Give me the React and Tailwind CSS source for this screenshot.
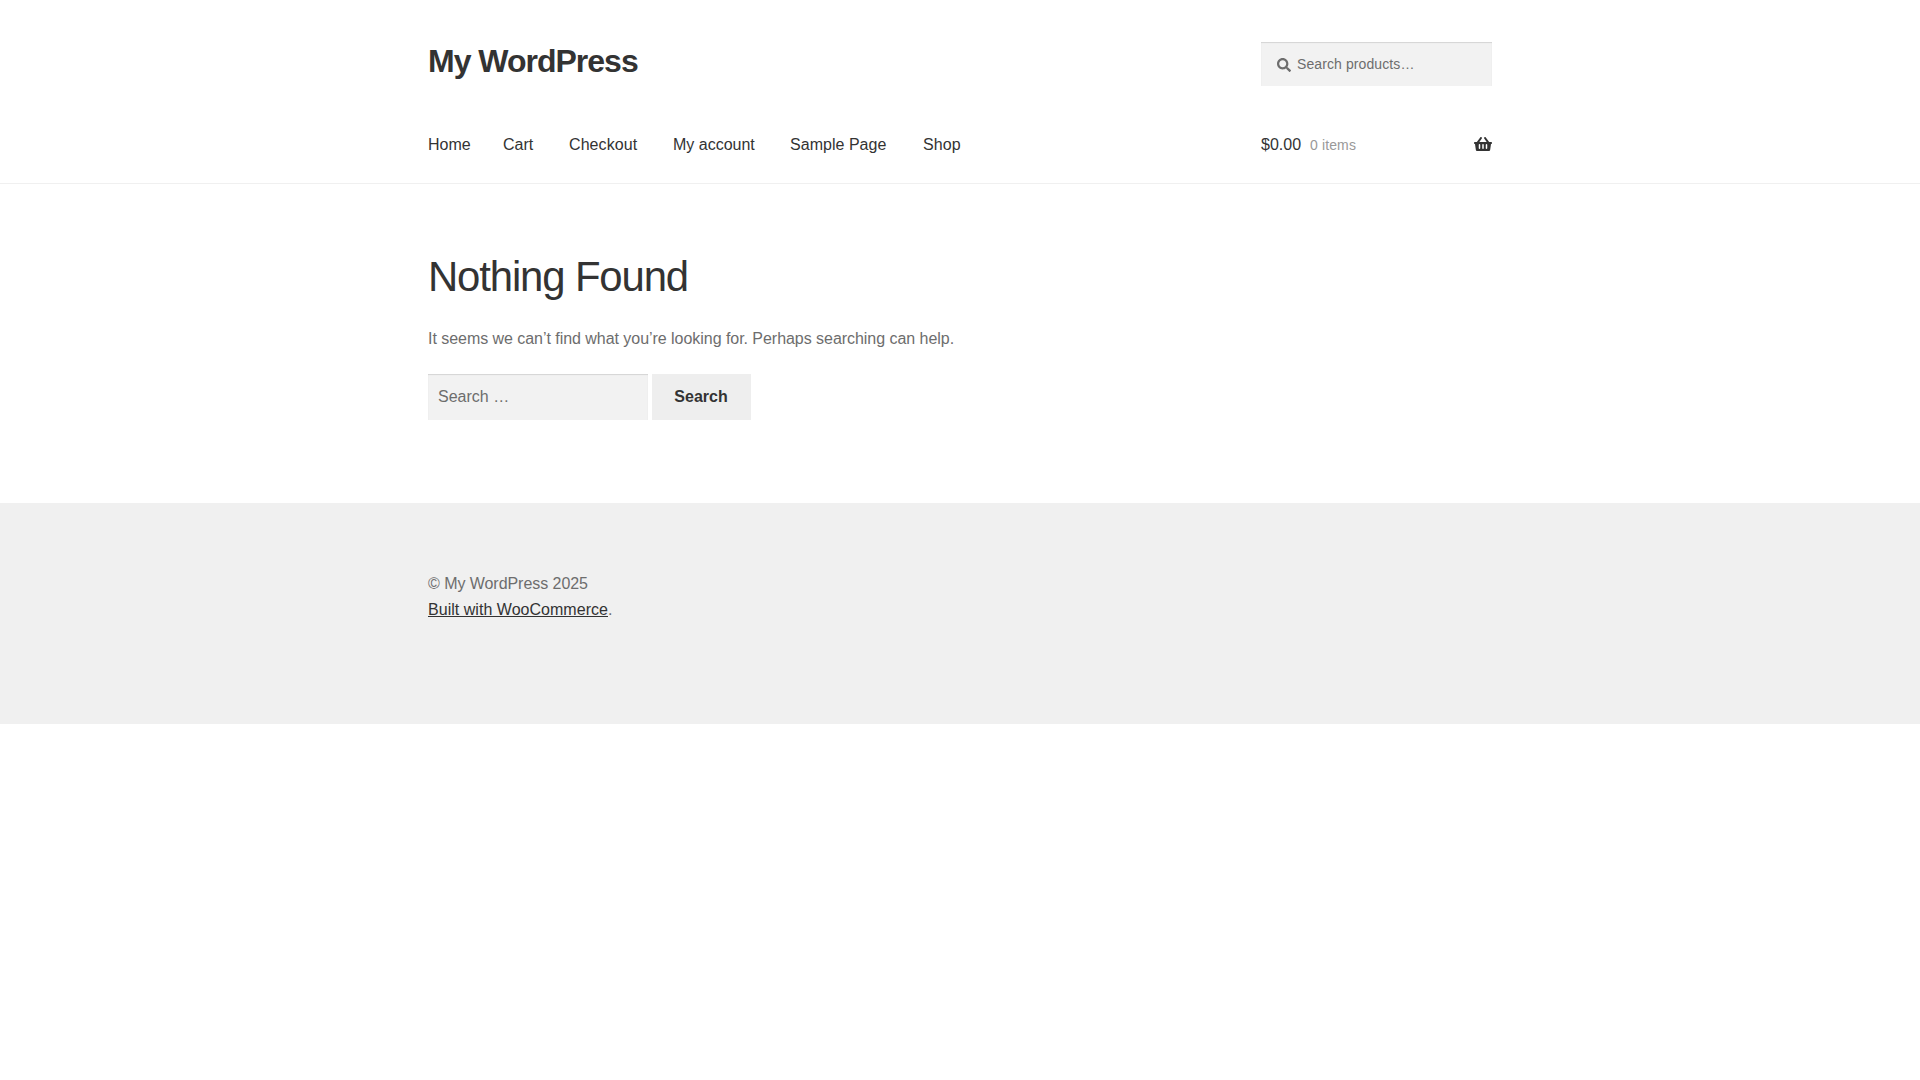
import { FaSearch, FaShoppingBasket } from 'react-icons/fa';

const menuItems = [
  { label: 'Home', className: 'w-[75px]' },
  { label: 'Cart', className: 'w-[66px]' },
  { label: 'Checkout', className: 'w-[104px] tracking-[0.08px]' },
  { label: 'My account', className: 'w-[117px]' },
  { label: 'Sample Page', className: 'w-[133px] tracking-[0.03px]' },
  { label: 'Shop', className: 'tracking-[0.08px]' },
];

function Header() {
  return (
    <header className="h-[184px] border-b border-[#f0f0f0] pt-[42px]">
      <div className="w-[1064px] mx-auto">
        <div className="flex justify-between items-start h-[78px]">
          <a href="#" className="text-[32px] leading-[38px] font-bold tracking-[-1px] text-[#333333]">
            My WordPress
          </a>
          <form className="relative w-[231px]">
            <FaSearch className="absolute left-4 top-4 w-[14px] h-[14px] text-[#6d6d6d]" />
            <input
              type="search"
              placeholder="Search products…"
              className="block w-full h-11 pl-9 pr-4 bg-[#f2f2f2] text-sm tracking-[0.1px] placeholder:text-[#6d6d6d] shadow-[inset_0_1px_1px_rgba(0,0,0,0.125)]"
            />
          </form>
        </div>

        <div className="flex justify-between h-12 items-center text-[#333333]">
          <nav className="flex pt-0.5">
            {menuItems.map((item) => (
              <a key={item.label} href="#" className={item.className}>
                {item.label}
              </a>
            ))}
          </nav>
          <a href="#" className="flex items-center w-[231px]">
            <span className="pt-0.5">$0.00</span>
            <span className="ml-[9px] pt-0.5 text-sm tracking-[0.12px] text-[#999999]">0 items</span>
            <FaShoppingBasket className="ml-auto w-[18px] h-4" />
          </a>
        </div>
      </div>
    </header>
  );
}

function NothingFound() {
  return (
    <main className="w-[1064px] mx-auto h-[319px] pt-[67px]">
      <h1 className="text-[41.9px] leading-[51px] tracking-[-1.14px] font-light text-[#333333]">
        Nothing Found
      </h1>
      <p className="mt-6 leading-[26px] tracking-[-0.042px] [font-variant-ligatures:common-ligatures]">
        It seems we can’t find what you’re looking for. Perhaps searching can help.
      </p>
      <form className="flex gap-1 mt-[22px]">
        <input
          type="search"
          placeholder="Search …"
          className="w-[220px] h-[46px] px-[10px] bg-[#f2f2f2] placeholder:text-[#6d6d6d] shadow-[inset_0_1px_1px_rgba(0,0,0,0.125)]"
        />
        <button type="button" className="w-[99px] h-[46px] pr-px bg-[#eeeeee] font-semibold text-[#333333]">
          Search
        </button>
      </form>
    </main>
  );
}

function Footer() {
  return (
    <footer className="h-[221px] bg-[#f0f0f0] pt-[68px]">
      <div className="w-[1064px] mx-auto leading-[26px]">
        <span className="tracking-[-0.05px]">© My WordPress 2025</span>
        <br />
        <a href="#" className="underline tracking-[0.03px] text-[#333333]">Built with WooCommerce</a>.
      </div>
    </footer>
  );
}

export default function App() {
  return (
    <div className="min-h-screen bg-white text-base text-[#6d6d6d] font-['Liberation_Sans',Arial,sans-serif]">
      <Header />
      <NothingFound />
      <Footer />
    </div>
  );
}
